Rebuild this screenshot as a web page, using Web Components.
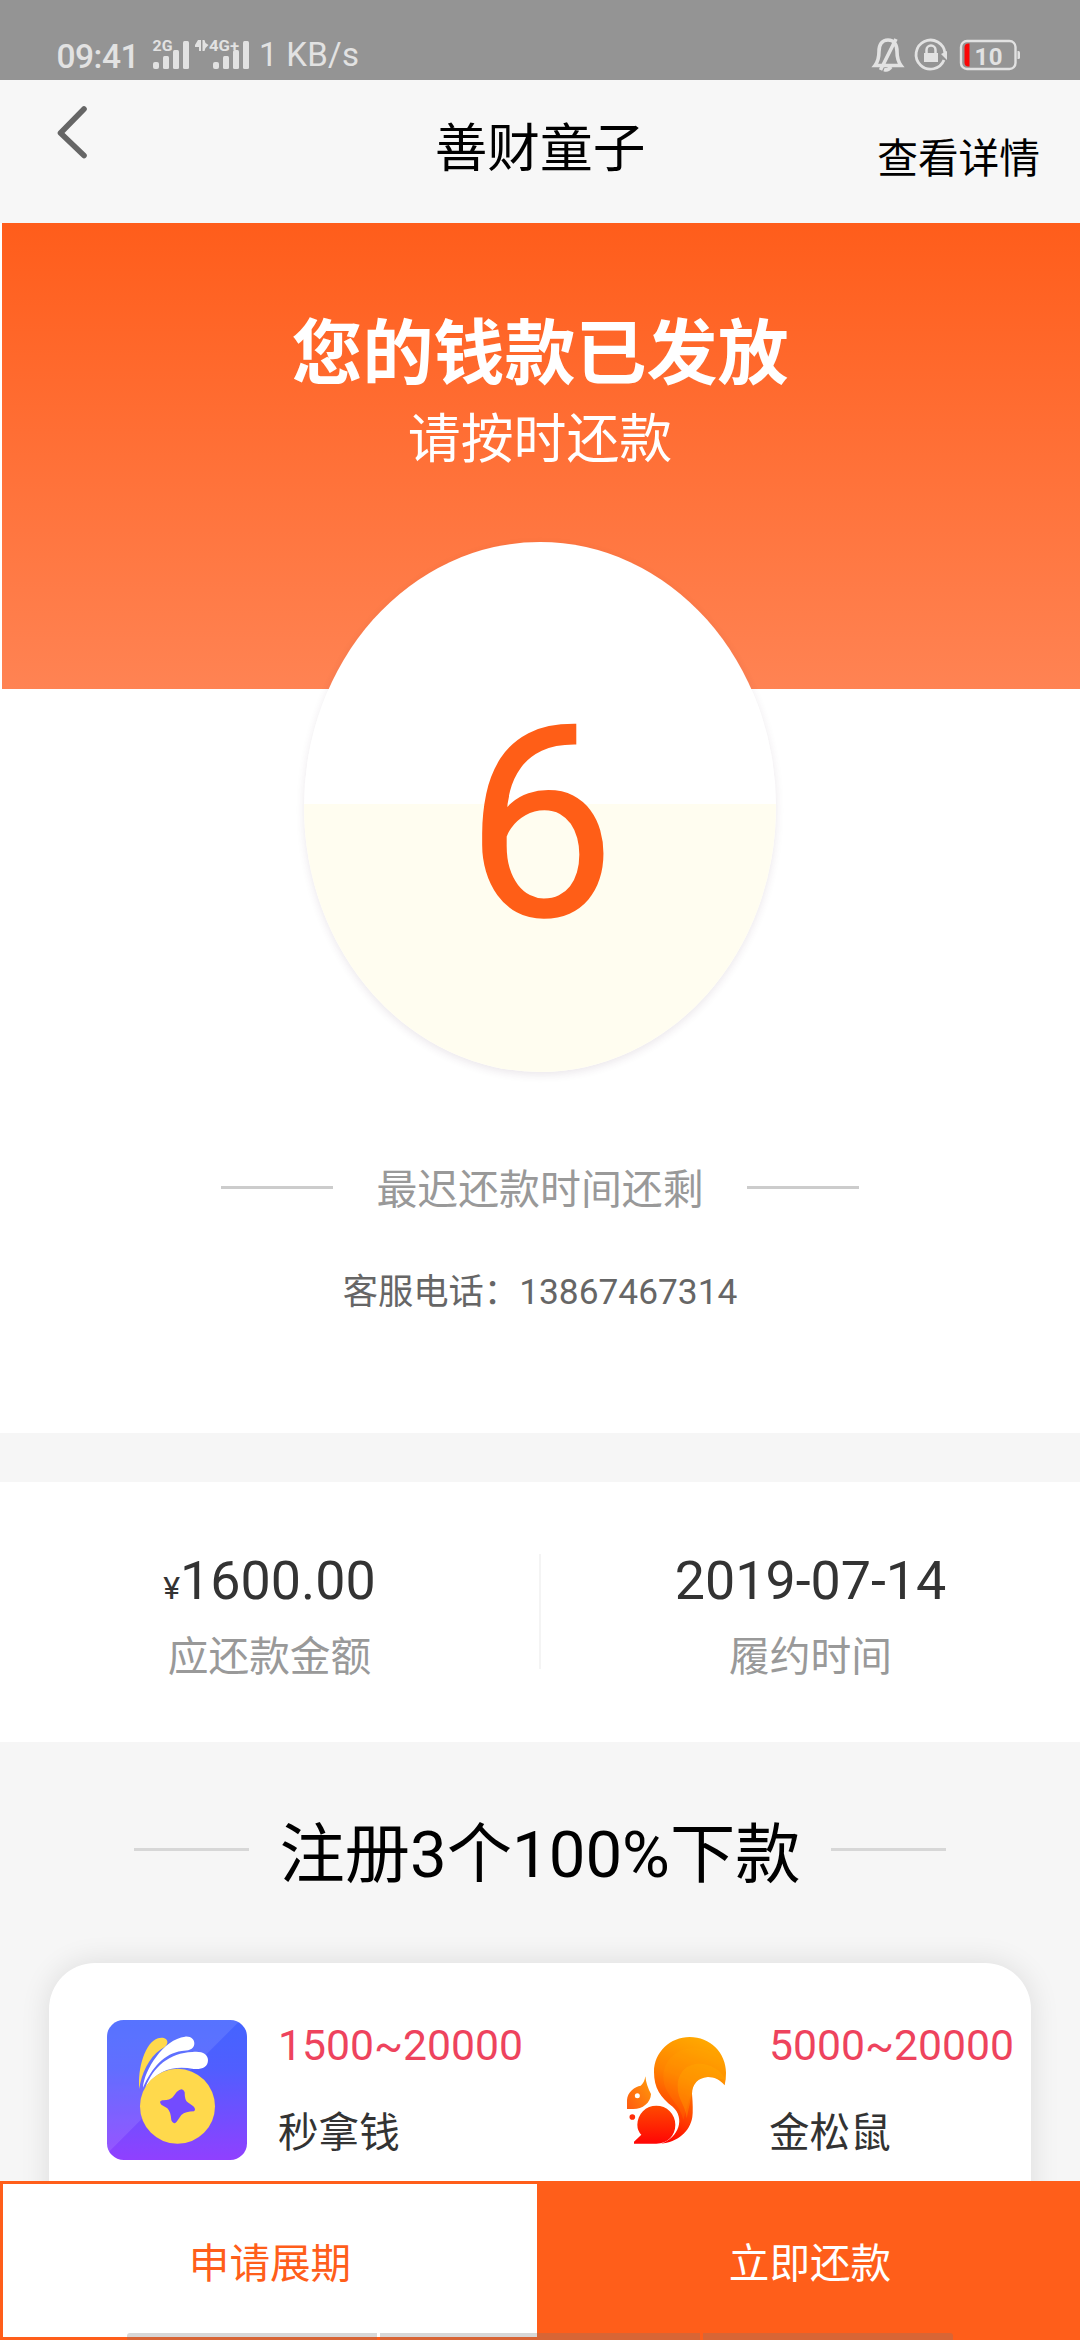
<!DOCTYPE html>
<html lang="zh-CN">
<head>
<meta charset="utf-8">
<title>善财童子</title>
<style>
html,body{margin:0;padding:0}
body{width:1080px;height:2340px;overflow:hidden;background:#fff;font-family:Roboto,"Noto Sans CJK SC",sans-serif;color:#333}
</style>
</head>
<body>
<loan-page></loan-page>
<script>
const define=(name,html)=>customElements.define(name,class extends HTMLElement{
  constructor(){
    super();
    const t=document.createElement('template');
    t.innerHTML=html;
    this.attachShadow({mode:'open'}).append(t.content.cloneNode(true));
  }
});

define('status-bar',`
<style>
:host{display:flex;justify-content:space-between;height:80px;background:#949494;color:#e2e2e2;fill:#e2e2e2}
svg{display:block}
text{font-family:Roboto,sans-serif}
</style>
<svg width="400" height="80" viewBox="0 0 400 80">
  <text x="56.500" y="68" font-size="33.500" font-weight="500" textLength="83">09:41</text>
  <text x="152.500" y="51" font-size="15" font-weight="700" textLength="20" lengthAdjust="spacingAndGlyphs">2G</text>
  <rect x="153" y="62" width="6" height="7" rx="2"/><rect x="163" y="56" width="6" height="13" rx="1.500"/><rect x="173" y="50" width="6" height="19" rx="1.500"/><rect x="183" y="41" width="6" height="28" rx="1.500"/>
  <path d="M198 40h3v11h-2v-4h-4v-2zM202.500 40h2l1 3 3 2-3 3-1 3h-2z"/>
  <text x="209" y="51" font-size="15" font-weight="700" textLength="30" lengthAdjust="spacingAndGlyphs">4G+</text>
  <rect x="213" y="62" width="6" height="7" rx="2"/><rect x="223" y="56" width="6" height="13" rx="1.500"/><rect x="233" y="50" width="6" height="19" rx="1.500"/><rect x="243" y="41" width="6" height="28" rx="1.500"/>
  <text x="259" y="66" font-size="33" textLength="100">1 KB/s</text>
</svg>
<svg width="220" height="80" viewBox="860 0 220 80">
  <g fill="none" stroke="#e2e2e2" stroke-width="3.600">
    <path d="M875 65.500c3-4 4-8 4-14 0-7 3-11.500 9-11.500s9 4.500 9 11.500c0 6 1 10 4 14zM880.500 70L896 39M884 69.500q4 1.500 7-2.500"/>
    <path d="M944 60a14.500 14.500 0 1 1 1-6.500" stroke-width="2.800"/>
    <path d="M926.500 54v-4a4.500 4.500 0 0 1 9 0v4" stroke-width="2.500"/>
    <rect x="961" y="41" width="54.500" height="28" rx="6" stroke-width="2.400"/>
  </g>
  <path d="M924 53h14v9h-14zM941 54l6-3v9z"/>
  <path d="M1017.500 51h1q1.500 0 1.500 1.500v5q0 1.500-1.500 1.500h-1z"/>
  <path d="M969.500 43.500v23h-1q-4 0-4-4v-15q0-4 4-4z" fill="#fb0606"/>
  <text x="974.500" y="64.500" font-size="24" font-weight="700" textLength="28">10</text>
</svg>`);

define('nav-header',`
<style>
:host{display:grid;grid-template-columns:270px 1fr 270px;height:143px;background:#f7f7f7;color:#000}
svg{display:block;margin:24px 0 0 50px}
.t{text-align:center;font-size:52.700px;line-height:60px;padding-top:39px}
.r{text-align:right;font-size:40.700px;line-height:48px;padding:55px 40px 0 0}
</style>
<svg width="44" height="60" viewBox="0 0 44 60"><path d="M34 5L10.500 29l23.500 22.500" fill="none" stroke="#666" stroke-width="5.600" stroke-linecap="round" stroke-linejoin="round"/></svg>
<div class="t"><slot></slot></div><div class="r"><slot name="action"></slot></div>`);

define('loan-hero',`
<style>
:host{display:block;height:466px;margin-left:2px;background:linear-gradient(#ff5d1b,#ff8353);color:#fff;text-align:center}
.h{font-size:71px;font-weight:700;line-height:80px;padding-top:91px;margin-left:-2px}
.s{font-size:52.900px;line-height:60px;padding-top:16px;margin-left:-2px}
</style>
<div class="h"><slot></slot></div><div class="s"><slot name="sub"></slot></div>`);

define('day-dial',`
<style>
:host{display:flex;justify-content:center;align-items:center;box-sizing:border-box;width:472px;height:530px;margin:-147px auto 0;position:relative;border-radius:50%;background:linear-gradient(#fff 0 262px,#fffdf0 262px);box-shadow:0 3px 8px rgba(70,40,70,.11);color:#ff5e17;font-size:270px;line-height:300px}
span{display:block;padding:33px 0 0 1px}
</style><span><slot></slot></span>`);

define('line-title',`
<style>
:host{display:flex;justify-content:center;align-items:center;gap:var(--gap,43px);font-size:var(--size,40.900px);line-height:var(--lh,48px);color:var(--ink,#999)}
i{display:block;width:var(--line,112px);height:3px;background:var(--rule,#ccc);margin-top:var(--shift,-6px)}
span{white-space:nowrap}
</style><i></i><span><slot></slot></span><i></i>`);

define('stat-pair',`
<style>
:host{display:flex;align-items:flex-start;height:188px;padding-top:72px;background:#fff;width:1080px}
::slotted(*){flex:1}
i{width:2px;height:115px;background:#f4f4f4}
</style><slot name="a"></slot><i></i><slot name="b"></slot>`);

define('stat-item',`
<style>
:host{display:flex;flex-direction:column;align-items:center;white-space:nowrap}
.v{font-size:53.800px;line-height:60px;height:60px;color:#333;margin-top:-3px}
.l{font-size:40.700px;line-height:48px;color:#999;margin-top:22px}
::slotted(small){font-size:32px;line-height:0}
</style><div class="v"><slot></slot></div><div class="l"><slot name="label"></slot></div>`);

define('offer-card',`
<style>
:host{display:flex;box-sizing:border-box;width:982px;height:320px;margin:0 auto;padding:57px 0 0 58px;border-radius:46px;background:#fff;box-shadow:0 0 30px rgba(0,0,0,.11)}
</style><slot></slot>`);

define('offer-item',`
<style>
:host{display:flex;flex:0 0 491px;gap:31px}
div{white-space:nowrap}
.a{font-size:42.700px;line-height:48px;color:#ee435d;padding-top:1px}
.n{font-size:40.600px;line-height:48px;color:#333;margin-top:40px}
::slotted(*){flex:none}
</style><slot name="icon"></slot><div><div class="a"><slot></slot></div><div class="n"><slot name="name"></slot></div></div>`);

define('coin-logo',`
<style>:host{display:block;width:140px;height:140px}svg{display:block}</style>
<svg width="140" height="140" viewBox="231 240 420 420">
<defs><linearGradient id="g" x2="0" y2="1"><stop stop-color="#4464ff"/><stop offset=".35" stop-color="#505eff"/><stop offset="1" stop-color="#9040ff"/></linearGradient>
<clipPath id="c"><rect x="231" y="240" width="420" height="420" rx="50"/></clipPath></defs>
<g clip-path="url(#c)"><path fill="url(#g)" d="M231 240h420v420H231z"/><path fill="#fff" opacity=".1" d="M231 240H632L231 641z"/></g>
<path fill="#ffd94c" d="M328 447C322 385 346 306 384 295C399 290 414 297 412 308C411 317 401 323 391 329C357 352 333 403 328 447z"/>
<path fill="#fff" d="M339 443C342 391 401 297 465 290C483 288 494 299 493 312C491 330 474 332 455 333C404 340 366 382 339 443z"/>
<path fill="#fff" d="M347 441C369 382 418 338 487 336C516 332 534 343 534 360C534 382 515 389 491 387C437 377 386 386 347 441z"/>
<circle cx="442.500" cy="499" r="112.500" fill="#ffd94c"/>
<path fill="#734bff" d="M440 456Q457 439 464 456Q464 480 472 486L490 499Q499 508 492 514Q467 514 454 525L440 545Q430 556 424 541Q422 514 412 505L394 494Q385 484 397 481Q418 482 428 472z"/>
</svg>`);

define('squirrel-logo',`
<style>:host{display:block;width:140px;height:140px}svg{display:block}</style>
<svg width="140" height="140" viewBox="-6 240 420 420">
<defs><linearGradient id="a" gradientUnits="userSpaceOnUse" x1="330" y1="300" x2="210" y2="610"><stop stop-color="#ffaa00"/><stop offset=".4" stop-color="#ff8200"/><stop offset=".7" stop-color="#ff4a00"/><stop offset="1" stop-color="#ff0500"/></linearGradient>
<linearGradient id="b" x2="0" y2="1"><stop stop-color="#ff4a00"/><stop offset="1" stop-color="#ff0505"/></linearGradient>
<linearGradient id="h" x1="1" x2="0" y2="1"><stop stop-color="#ff9d0a"/><stop offset="1" stop-color="#ff5a10"/></linearGradient>
<clipPath id="t"><path d="M183 611C237 592 256 534 218 500C181 472 162 443 162 396C162 336 211 291 269 291C330 291 378 338 378 398Q378 418 374 436C362 421 345 411 324 411C296 412 276 432 276 461Q280 507 277 531C270 575 232 607 183 611z"/></clipPath></defs>
<path fill="url(#a)" d="M183 611C237 592 256 534 218 500C181 472 162 443 162 396C162 336 211 291 269 291C330 291 378 338 378 398Q378 418 374 436C362 421 345 411 324 411C296 412 276 432 276 461Q280 507 277 531C270 575 232 607 183 611z"/>
<g clip-path="url(#t)" fill="#ffb000"><path opacity=".13" d="M190 410C191 360 230 325 278 325C320 325 350 340 378 370V440L270 470L250 540C241 490 190 465 190 410z"/><path opacity=".3" d="M233 440C233 398 260 371 297 371C335 371 365 394 379 420L320 410L276 460L260 535C257 495 233 480 233 440z"/></g>
<path fill="url(#b)" d="M102 611V605L124 584Q112 572 112 554A57 57 0 1 1 226 554C226 586 203 611 169 611z"/>
<path fill="url(#h)" d="M81 507V480C82 456 105 440 122 437Q134 427 136 409Q139 437 153 462C152 490 125 509 96 507z"/>
<circle cx="112" cy="467" r="7.500" fill="#fff"/><circle cx="97" cy="531" r="8.500" fill="#ff2d08"/>
</svg>`);

define('action-bar',`
<style>
:host{display:flex;width:1080px;height:159px;position:absolute;top:2181px;left:0;font-size:40.600px;line-height:48px;text-align:center}
div{flex:1;box-sizing:border-box;border:3px solid #ff5e1a;padding-top:56px;background:#fff;color:#ff5e1a}
div+div{background:#ff5e1a;color:#fff}
nav{position:absolute;left:127px;bottom:0;display:flex;gap:3px}
i{width:250px;height:7px;background:rgba(120,120,120,.29);border-top-left-radius:3px}
i:nth-child(2){width:320px;border-radius:0}i:nth-child(3){border-radius:0 3px 0 0}
</style><div><slot name="extend"></slot></div><div><slot name="repay"></slot></div><nav><i></i><i></i><i></i></nav>`);

define('loan-page',`
<style>
:host{display:flex;flex-direction:column;position:relative;width:1080px;height:2340px;overflow:hidden;background:#fff}
:host>*{flex:none}
.due{display:block;padding-top:94px}
.tel{text-align:center;font-size:35.300px;line-height:42px;color:#666;margin-top:57px}
.top{height:1433px}
.gap{height:49px;background:#f6f6f6}
.more{height:595px;background:#f6f6f6;padding-top:73px}
.more line-title{--size:65.300px;--lh:80px;--ink:#000;--line:115px;--gap:30px;--rule:#d7d7d7;--shift:-11px;margin-bottom:68px}
</style>
<section class="top">
<status-bar></status-bar>
<nav-header>善财童子<span slot="action">查看详情</span></nav-header>
<loan-hero>您的钱款已发放<span slot="sub">请按时还款</span></loan-hero>
<day-dial>6</day-dial>
<div class="due"><line-title>最迟还款时间还剩</line-title><div class="tel">客服电话：13867467314</div></div>
</section>
<div class="gap"></div>
<stat-pair>
<stat-item slot="a"><small>¥</small>1600.00<span slot="label">应还款金额</span></stat-item>
<stat-item slot="b">2019-07-14<span slot="label">履约时间</span></stat-item>
</stat-pair>
<section class="more">
<line-title>注册3个100%下款</line-title>
<offer-card>
<offer-item><coin-logo slot="icon"></coin-logo>1500~20000<span slot="name">秒拿钱</span></offer-item>
<offer-item><squirrel-logo slot="icon"></squirrel-logo>5000~20000<span slot="name">金松鼠</span></offer-item>
</offer-card>
</section>
<action-bar><span slot="extend">申请展期</span><span slot="repay">立即还款</span></action-bar>`);
</script>
</body>
</html>
